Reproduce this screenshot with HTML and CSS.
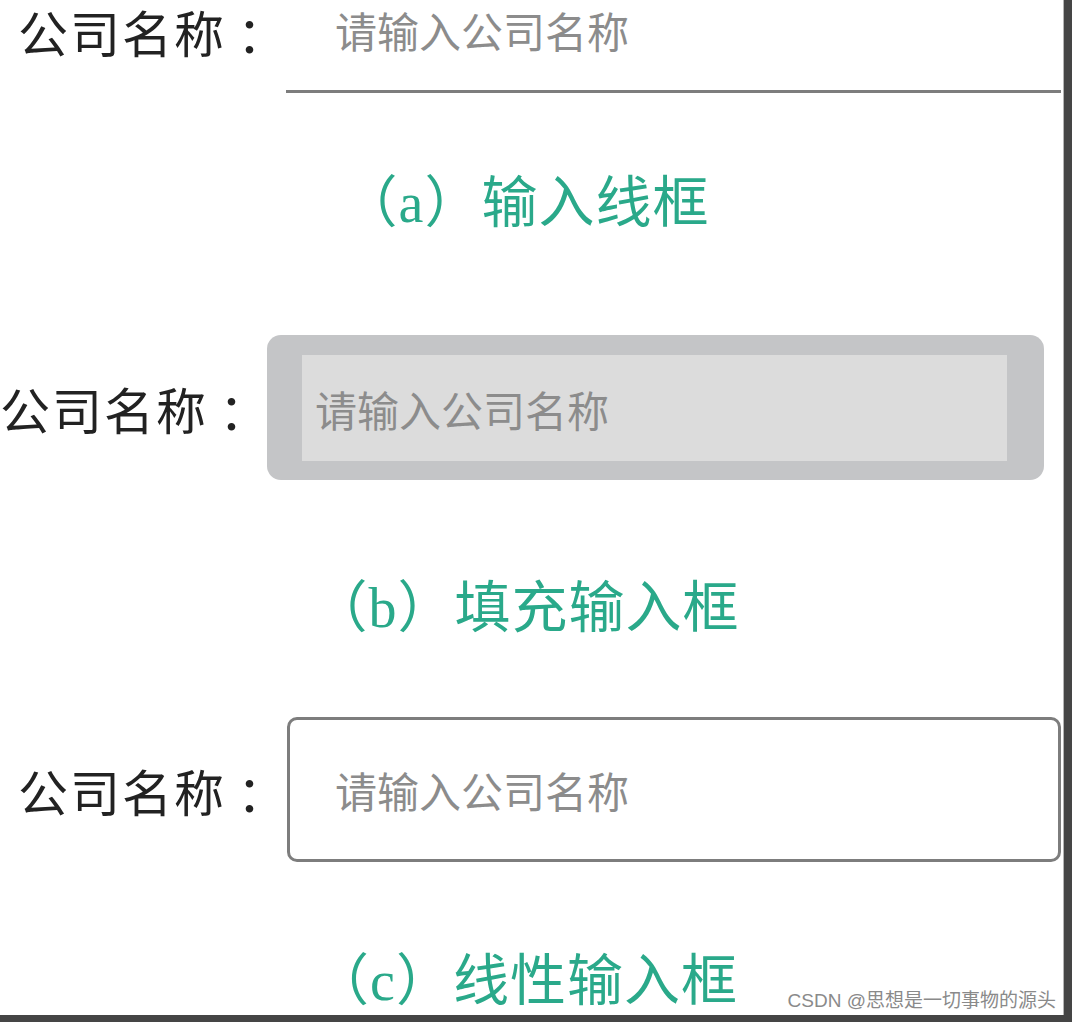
FILE: index.html
```html
<!doctype html>
<html lang="zh-CN">
<head>
	<meta charset="utf-8">
	<meta name="viewport" content="width=device-width, initial-scale=1">
	<title>输入框样式</title>
	<link rel="stylesheet" href="styles.css">
</head>
<body>

	<main class="canvas">

		<!-- (a) 线框 -->
		<section class="row row-line">
			<label class="label" for="name-a">公司名称<span class="colon">：</span></label>
			<input class="input input-line" id="name-a" type="text" placeholder="请输入公司名称">
		</section>
		<p class="caption caption-a">（a）输入线框</p>

		<!-- (b) 填充 -->
		<section class="row row-fill">
			<label class="label" for="name-b">公司名称<span class="colon">：</span></label>
			<div class="fill-wrap">
				<input class="input input-fill" id="name-b" type="text" placeholder="请输入公司名称">
			</div>
		</section>
		<p class="caption caption-b">（b）填充输入框</p>

		<!-- (c) 线性 -->
		<section class="row row-outline">
			<label class="label" for="name-c">公司名称<span class="colon">：</span></label>
			<input class="input input-outline" id="name-c" type="text" placeholder="请输入公司名称">
		</section>
		<p class="caption caption-c">（c）线性输入框</p>

		<span class="watermark">CSDN @思想是一切事物的源头</span>
	</main>

</body>
</html>
```

FILE: styles.css
```css
:root {
	--label-color: #222;
	--hint-color: #8c8c8c;
	--green: #2aa98a;
	--line-color: #7d7d7d;
	--cjk: "Noto Sans CJK SC", "Noto Sans", sans-serif;
}

html, body {
	margin: 0;
	height: 100%;
}
body {
	background-color: #454545;
	font-family: var(--cjk);
}

.canvas {
	position: relative;
	box-sizing: border-box;
	width: 1064px;
	height: 1015px;
	background: #fff;
	border-right: 1px solid #b4b4b4;
	overflow: hidden;
}

/* rows */
.row {
	display: flex;
	align-items: center;
}
.row-line {
	align-items: flex-start;
	padding-top: 2px;
	padding-left: 18px;
	gap: 19px;
}
.row-fill {
	margin-top: 104px;
	padding-left: 0;
	gap: 18px;
}
.row-outline {
	margin-top: 81px;
	padding-left: 18px;
	gap: 20px;
}

.label {
	flex: none;
	font-size: 50px;
	line-height: 58px;
	letter-spacing: 2px;
	color: var(--label-color);
	white-space: nowrap;
}
/* colon sits further right, like in the mockup */
.colon {
	margin-left: 11px;
	margin-right: -20px;
	letter-spacing: 0;
}

.input {
	box-sizing: border-box;
	font-family: var(--cjk);
	font-size: 42px;
	color: var(--label-color);
	outline: none;
	margin: 0;
}
.input::placeholder {
	color: var(--hint-color);
	opacity: 1;
}

/* (a) */
.input-line {
	width: 775px;
	height: 91px;
	padding: 0 0 33px 49px;
	border: none;
	border-bottom: 3px solid var(--line-color);
	background: transparent;
}

/* (b) */
.fill-wrap {
	box-sizing: border-box;
	width: 777px;
	height: 145px;
	padding: 20px 37px 19px 35px;
	background: #c4c5c7;
	border-radius: 14px;
}
.input-fill {
	width: 100%;
	height: 100%;
	padding: 0 0 0 13px;
	border: none;
	background: #dcdcdc;
}

/* (c) */
.input-outline {
	width: 774px;
	height: 145px;
	padding: 0 0 0 45px;
	border: 3px solid var(--line-color);
	border-radius: 10px;
	background: #fff;
}

/* captions */
.caption {
	margin: 0;
	padding-right: 12px;
	text-align: center;
	font-family: "Liberation Serif", "Noto Sans CJK SC", serif;
	font-size: 56px;
	line-height: 56px;
	letter-spacing: 1px;
	color: var(--green);
	white-space: nowrap;
}
.caption-a { margin-top: 82px; }
.caption-b { margin-top: 100px; }
.caption-c { margin-top: 91px; }

.watermark {
	position: absolute;
	right: 7px;
	bottom: 2px;
	font-family: "Liberation Sans", "Noto Sans CJK SC", sans-serif;
	font-size: 19px;
	line-height: 24px;
	color: #8a8a8a;
	white-space: nowrap;
}
```
